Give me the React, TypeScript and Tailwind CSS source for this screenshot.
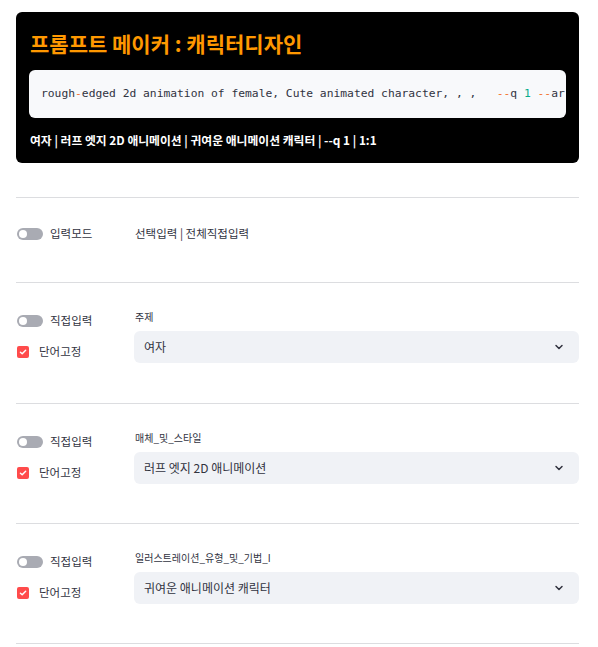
import { ChevronDown } from "lucide-react";

const font = { fontFamily: '"Noto Sans CJK KR", "Noto Sans", sans-serif' };

function Toggle({ label }: { label: string }) {
  return (
    <div className="flex items-center h-5 gap-[7px]">
      <div className="relative w-[26px] h-[12px] rounded-full bg-[#a9abb3]">
        <div className="absolute left-[2px] top-[2px] w-[8px] h-[8px] rounded-full bg-white" />
      </div>
      <span className="text-[11.5px] text-[#31333f]">{label}</span>
    </div>
  );
}

function Check({ label }: { label: string }) {
  return (
    <div className="flex items-center h-5 gap-[10px]">
      <div className="w-[12px] h-[12px] rounded-[2px] bg-[#ff4b4b] grid place-items-center">
        <svg width="8" height="8" viewBox="0 0 10 10" fill="none">
          <path d="M1.8 5.2 L4 7.3 L8.3 2.8" stroke="white" strokeWidth="1.8" strokeLinecap="round" strokeLinejoin="round" />
        </svg>
      </div>
      <span className="text-[11.5px] text-[#31333f]">{label}</span>
    </div>
  );
}

function SelectRow({ title, value, first }: { title: string; value: string; first?: boolean }) {
  return (
    <div className={`flex border-t border-[#dcdde0] pt-[27px] ${first ? "pb-[40px]" : "pb-[39px]"}`}>
      <div className="w-[118px] flex flex-col gap-[11px] pt-[1px] pl-[1px]">
        <Toggle label="직접입력" />
        <Check label="단어고정" />
      </div>
      <div className="flex-1 flex flex-col gap-[7px]">
        <div className="text-[10px] leading-[14px] text-[#31333f] pl-[1px]">{title}</div>
        <div className="h-[32px] rounded-[6px] bg-[#f0f2f6] flex items-center justify-between pl-[10px] pr-[14px]">
          <span className="text-[12px] text-[#31333f]">{value}</span>
          <ChevronDown size={12} strokeWidth={3} className="text-[#31333f]" />
        </div>
      </div>
    </div>
  );
}

export default function App() {
  return (
    <div className="w-[598px] min-h-[647px] bg-white pl-[16px] pr-[19px] pt-[12px]" style={font}>
      <div className="bg-black rounded-[6px] px-[13px] pt-[17px] pb-[14px]">
        <h1 className="text-[21px] leading-[28px] font-bold text-[#ff9800] pl-[1px]">
          프롬프트 메이커 : 캐릭터디자인
        </h1>
        <div className="mt-[13px] h-[48px] rounded-[6px] bg-[#f8f9fb] flex items-center pl-[12px] overflow-hidden">
          <pre
            className="text-[11.3px] text-[#31333f] whitespace-pre"
            style={{ fontFamily: '"DejaVu Sans Mono", "Liberation Mono", monospace' }}
          >
            rough<span className="text-[#f3722c]">-</span>edged 2d animation of female, Cute animated character, , ,{"   "}
            <span className="text-[#f3722c]">--</span>q <span className="text-[#09ab8b]">1</span>{" "}
            <span className="text-[#f3722c]">--</span>ar
          </pre>
        </div>
        <div className="mt-[13px] text-[11.8px] leading-[18px] font-semibold text-white pl-[1px]">
          여자 | 러프 엣지 2D 애니메이션 | 귀여운 애니메이션 캐릭터 | --q 1 | 1:1
        </div>
      </div>

      <div className="mt-[34px] border-t border-[#dcdde0] pt-[26px] pb-[38px] flex items-center">
        <div className="w-[118px] pl-[1px]">
          <Toggle label="입력모드" />
        </div>
        <span className="text-[11.5px] text-[#31333f] pl-[1px]">선택입력 | 전체직접입력</span>
      </div>

      <SelectRow title="주제" value="여자" first />
      <SelectRow title="매체_및_스타일" value="러프 엣지 2D 애니메이션" />
      <SelectRow title="일러스트레이션_유형_및_기법_I" value="귀여운 애니메이션 캐릭터" />
      <div className="border-t border-[#dcdde0]" />
    </div>
  );
}
